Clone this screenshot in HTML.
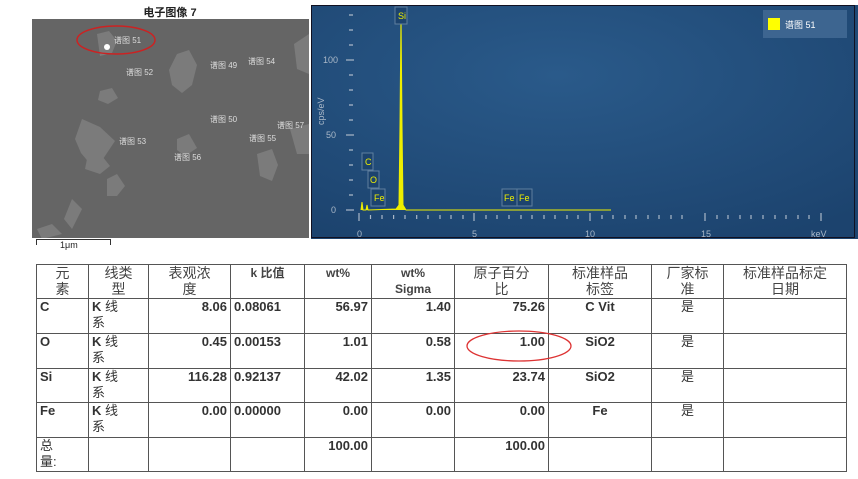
<!DOCTYPE html>
<html><head><meta charset="utf-8"><style>
body{margin:0;width:858px;height:479px;background:#fff;position:relative;overflow:hidden;font-family:"Liberation Sans","Noto Sans CJK SC",sans-serif}
.abs{position:absolute}
table{position:absolute;left:36px;top:264px;border-collapse:collapse;table-layout:fixed;font-size:13px;color:#333}
td{border:1.5px solid #555;vertical-align:top;padding:0 3px;line-height:16px;overflow:hidden}
.r{text-align:right;font-weight:bold}
.c{text-align:center}
.b{font-weight:bold}
.h td{font-size:14px;color:#444}
</style></head><body>
<div class="abs" style="left:32px;top:4px;width:276px;text-align:center;font-size:11px;font-weight:bold;color:#222">电子图像 7</div>
<svg class="abs" style="left:32px;top:19px" width="277" height="219" viewBox="0 0 277 219">
<rect width="277" height="219" fill="#656565"/>
<g fill="#8a8a8a" opacity=".6">
<path d="M65 15l12-3 8 10-5 12-12 3z"/><path d="M145 35l12-4 8 15-5 20-10 8-10-8-3-15z"/>
<path d="M68 72l12-3 6 10-10 6-10-4z"/><path d="M50 100l18 8 15 14-12 18-12 6-10-12-6-14z"/>
<path d="M55 140l15-3 8 10-10 8-15-5z"/><path d="M75 160l10-5 8 12-8 10-10 0z"/><path d="M40 180l10 10-10 20-8-10z"/>
<path d="M145 120l12-5 8 14-12 8-8-6z"/>
<path d="M225 135l15-5 6 16-6 16-12-5z"/><path d="M262 25l15-10 0 40-12-5z"/><path d="M258 110l19-5 0 30-12 0z"/>
<path d="M5 210l15-5 10 10-20 5z"/></g>
<g fill="#ddd" font-size="8"><text x="82" y="24">谱图 51</text><text x="178" y="49">谱图 49</text><text x="94" y="56">谱图 52</text><text x="216" y="45">谱图 54</text><text x="178" y="103">谱图 50</text><text x="87" y="125">谱图 53</text><text x="217" y="122">谱图 55</text><text x="142" y="141">谱图 56</text><text x="245" y="109">谱图 57</text></g>
<circle cx="75" cy="28" r="3" fill="#fff"/>
<ellipse cx="84" cy="21" rx="39" ry="14" fill="none" stroke="#c22" stroke-width="1.5"/>
</svg>
<div class="abs" style="left:36px;top:239px;width:73px;height:5px;border:1px solid #333;border-bottom:none"></div>
<div class="abs" style="left:60px;top:240px;font-size:9px;color:#222">1μm</div>
<svg class="abs" style="left:311px;top:5px" width="547" height="234" viewBox="0 0 547 234">
<defs><radialGradient id="g" cx="45%" cy="30%" r="80%"><stop offset="0" stop-color="#2a5a8a"/><stop offset="1" stop-color="#1c436e"/></radialGradient></defs>
<rect width="547" height="234" fill="url(#g)"/>
<rect x="0.5" y="0.5" width="543" height="232" fill="none" stroke="#112" />
<g stroke="#aab8c8" stroke-width="1.2">
<line x1="35" y1="205" x2="43" y2="205"/><line x1="35" y1="130" x2="43" y2="130"/><line x1="35" y1="55" x2="43" y2="55"/>
<path d="M38 190h4M38 175h4M38 160h4M38 145h4M38 115h4M38 100h4M38 85h4M38 70h4M38 40h4M38 25h4M38 10h4"/>
<path d="M48 208v8M163 208v8M279 208v8M394 208v8M510 208v8"/>
<path d="M59.5 210v4M71 210v4M82.6 210v4M94 210v4M105.7 210v4M117 210v4M129 210v4M140 210v4M152 210v4M175 210v4M186 210v4M198 210v4M210 210v4M221 210v4M233 210v4M244 210v4M256 210v4M267 210v4M291 210v4M302 210v4M314 210v4M325 210v4M337 210v4M348 210v4M360 210v4M371 210v4M406 210v4M417 210v4M429 210v4M440 210v4M452 210v4M464 210v4M475 210v4M487 210v4M498 210v4"/>
</g>
<g fill="#aab8c8" font-size="9"><text x="20" y="208">0</text><text x="15" y="133">50</text><text x="12" y="58">100</text>
<text x="46" y="232">0</text><text x="161" y="232">5</text><text x="274" y="232">10</text><text x="390" y="232">15</text><text x="500" y="232">keV</text>
<text transform="translate(13 120) rotate(-90)">cps/eV</text></g>
<path d="M50 205L51 197 52 205 55 205 56 200 57 205 85 204 88 200 89 120 90 8 91 120 92 200 95 205 300 205" fill="#ee0" stroke="#ee0" stroke-width="1"/>
<g fill="#1c436e" stroke="#5f7f9f"><rect x="51" y="148" width="11" height="17"/><rect x="57" y="166" width="11" height="17"/><rect x="60" y="184" width="14" height="17"/><rect x="84" y="2" width="12" height="17"/><rect x="191" y="184" width="15" height="17"/><rect x="206" y="184" width="15" height="17"/></g>
<g fill="#ee0" font-size="9"><text x="54" y="160">C</text><text x="59" y="178">O</text><text x="63" y="196">Fe</text><text x="87" y="14">Si</text><text x="193" y="196">Fe</text><text x="208" y="196">Fe</text></g>
<rect x="452" y="5" width="84" height="28" fill="#3d6590"/>
<rect x="457" y="13" width="12" height="12" fill="#ff0"/>
<text x="474" y="23" fill="#fff" font-size="9">谱图 51</text>
</svg>
<table>
<colgroup><col style="width:52px"><col style="width:60px"><col style="width:82px"><col style="width:74px"><col style="width:67px"><col style="width:83px"><col style="width:94px"><col style="width:103px"><col style="width:72px"><col style="width:123px"></colgroup>
<tr class="h" style="height:34px"><td class="c">元<br>素</td><td class="c">线类<br>型</td><td class="c">表观浓<br>度</td><td class="b c" style="font-size:12px">k 比值</td><td class="c b" style="font-size:12px">wt%</td><td class="c b" style="font-size:12px">wt%<br>Sigma</td><td class="c">原子百分<br>比</td><td class="c">标准样品<br>标签</td><td class="c">厂家标<br>准</td><td class="c">标准样品标定<br>日期</td></tr>
<tr style="height:35px"><td class="b">C</td><td><b>K</b> 线<br>系</td><td class="r">8.06</td><td class="b">0.08061</td><td class="r">56.97</td><td class="r">1.40</td><td class="r">75.26</td><td class="c b">C Vit</td><td class="c">是</td><td></td></tr>
<tr style="height:35px"><td class="b">O</td><td><b>K</b> 线<br>系</td><td class="r">0.45</td><td class="b">0.00153</td><td class="r">1.01</td><td class="r">0.58</td><td class="r">1.00</td><td class="c b">SiO2</td><td class="c">是</td><td></td></tr>
<tr style="height:34px"><td class="b">Si</td><td><b>K</b> 线<br>系</td><td class="r">116.28</td><td class="b">0.92137</td><td class="r">42.02</td><td class="r">1.35</td><td class="r">23.74</td><td class="c b">SiO2</td><td class="c">是</td><td></td></tr>
<tr style="height:35px"><td class="b">Fe</td><td><b>K</b> 线<br>系</td><td class="r">0.00</td><td class="b">0.00000</td><td class="r">0.00</td><td class="r">0.00</td><td class="r">0.00</td><td class="c b">Fe</td><td class="c">是</td><td></td></tr>
<tr style="height:34px"><td>总<br>量:</td><td></td><td></td><td></td><td class="r">100.00</td><td></td><td class="r">100.00</td><td></td><td></td><td></td></tr>
</table>
<svg class="abs" style="left:465px;top:328px" width="110" height="36"><ellipse cx="54" cy="18" rx="52" ry="15" fill="none" stroke="#d33" stroke-width="1.3"/></svg>
</body></html>
